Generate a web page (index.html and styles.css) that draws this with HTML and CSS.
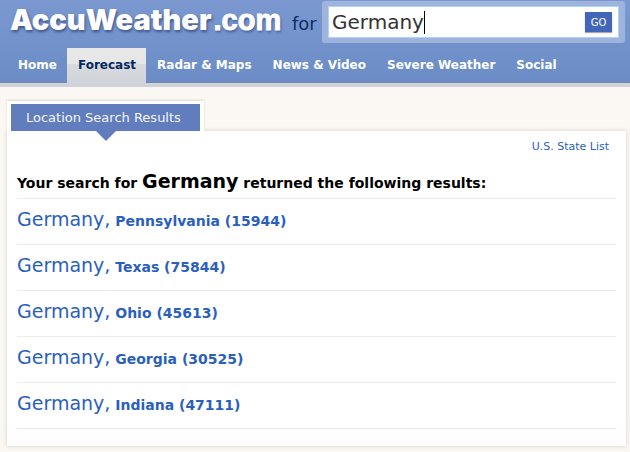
FILE: index.html
```html
<!DOCTYPE html>
<html lang="en">
<head>
<meta charset="utf-8">
<title>AccuWeather.com - Location Search Results</title>
<link rel="stylesheet" href="styles.css">
</head>
<body>
<header class="header">
  <form class="search">
    <a class="logo" href="#"><span class="logo-name">AccuWeather</span><span class="logo-domain">.com</span></a>
    <label class="search-label" for="location">for</label>
    <div class="search-frame">
      <div class="search-field">
        <input class="search-input" id="location" type="text" value="Germany">
        <span class="caret"></span>
        <button class="go" type="button">GO</button>
      </div>
    </div>
  </form>
  <nav class="nav">
    <a href="#">Home</a>
    <a class="active" href="#">Forecast</a>
    <a href="#">Radar &amp; Maps</a>
    <a href="#">News &amp; Video</a>
    <a href="#">Severe Weather</a>
    <a href="#">Social</a>
  </nav>
</header>
<main class="content">
  <div class="tab"><h1 class="tab-title">Location Search Results</h1></div>
  <section class="panel">
    <div class="panel-tools"><a href="#">U.S. State List</a></div>
    <h2 class="summary">Your search for <span class="query">Germany</span> returned the following results:</h2>
    <ul class="results">
      <li><a href="#">Germany,<b> Pennsylvania (15944)</b></a></li>
      <li><a href="#">Germany,<b> Texas (75844)</b></a></li>
      <li><a href="#">Germany,<b> Ohio (45613)</b></a></li>
      <li><a href="#">Germany,<b> Georgia (30525)</b></a></li>
      <li><a href="#">Germany,<b> Indiana (47111)</b></a></li>
    </ul>
  </section>
</main>
</body>
</html>
```
FILE: styles.css
```css
* {
  box-sizing: border-box;
}

body {
  margin: 0;
  background: #fbf8f3;
  font-family: "DejaVu Sans", sans-serif;
  font-size: 12px;
}

a {
  color: #2b5fbd;
  text-decoration: none;
}

.header {
  background: linear-gradient(#7b98d0, #6b8cc6);
  border-bottom: 4px solid #d0d4da;
  box-shadow: inset 0 -1px 0 #7787a5;
}

.search {
  display: flex;
  align-items: flex-start;
  height: 48px;
  padding: 1px 5px 0 10px;
}

.logo {
  display: flex;
  gap: 2px;
  align-items: baseline;
  width: 282px;
  line-height: 38px;
  color: #fff;
  text-shadow: 1px 2px 3px #3c5488;
}

.logo-name {
  font-family: Inter, sans-serif;
  font-size: 29px;
  font-weight: 900;
}

.logo-domain {
  font-family: "Liberation Sans", sans-serif;
  font-size: 29px;
  font-weight: 700;
  -webkit-text-stroke: 1px #fff;
}

.search-label {
  width: 30px;
  font-size: 18px;
  line-height: 46px;
  color: #0b2f66;
}

.search-frame {
  flex: 1;
  padding: 5px 6px;
  border-radius: 3px;
  background: #9fb4dc;
}

.search-field {
  display: flex;
  align-items: center;
  height: 32px;
  padding: 0 6px 0 3px;
  border: 1px solid #abd3fb;
  background: #fff;
}

.search-input {
  field-sizing: content;
  padding: 0;
  border: 0;
  outline: 0;
  background: none;
  font: 20px "DejaVu Sans", sans-serif;
  color: #333;
}

.caret {
  width: 1px;
  height: 23px;
  background: #000;
}

.go {
  width: 27px;
  height: 20px;
  margin-left: auto;
  padding: 0;
  border: 0;
  background: #4366b8;
  box-shadow: 0 1px 1px #aaa;
  font: 10px "DejaVu Sans", sans-serif;
  color: #fff;
}

.nav {
  display: flex;
  padding-left: 7px;
}

.nav a {
  padding: 0 10px 0 11px;
  font-weight: 700;
  line-height: 35px;
  color: #fff;
}

.nav .active {
  background: linear-gradient(#e7e7e8 45%, #d8dadd 45%, #d0d4da);
  color: #05295f;
}

.content {
  padding: 14px 4px 6px 7px;
}

.tab {
  position: relative;
  width: fit-content;
  padding: 3px 4px 0;
  background: #fff;
  box-shadow: 0 -1px 2px #ddd8d1;
}

.tab-title {
  margin: 0;
  padding: 0 19px 0 15px;
  background: #617dbd;
  font-size: 13px;
  font-weight: 400;
  line-height: 27px;
  color: #f3f6fc;
}

.tab-title::after {
  content: "";
  position: absolute;
  z-index: 1;
  top: 100%;
  left: 50%;
  margin-left: -9px;
  border: 10px solid transparent;
  border-top-color: #617dbd;
  border-bottom: 0;
}

.panel {
  padding: 7px 10px 17px;
  background: linear-gradient(#fff 90%, #fdfdfd);
  box-shadow: 0 0 4px #d0cbc4;
}

.panel-tools {
  padding-right: 7px;
  font-size: 11px;
  line-height: 17px;
  text-align: right;
}

.summary {
  margin: 0;
  padding-top: 12px;
  border-bottom: 1px solid #ececec;
  font-size: 14px;
  line-height: 29px;
}

.query {
  font-size: 19px;
}

.results {
  margin: 0;
  padding: 0;
  list-style: none;
}

.results li {
  height: 46px;
  border-bottom: 1px solid #ececec;
  font-size: 19px;
  line-height: 41px;
}

.results b {
  font-size: 14px;
}
```
